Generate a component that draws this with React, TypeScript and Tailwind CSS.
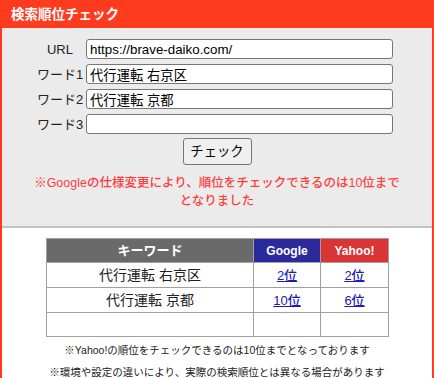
import { useState } from "react";

const font = { fontFamily: '"Liberation Sans", "Noto Sans CJK JP", sans-serif' };

interface Row {
  word: string;
  google: string;
  yahoo: string;
}

export default function App() {
  const [url, setUrl] = useState("https://brave-daiko.com/");
  const [words, setWords] = useState(["代行運転 右京区", "代行運転 京都", ""]);

  const rows: Row[] = [
    { word: "代行運転 右京区", google: "2位", yahoo: "2位" },
    { word: "代行運転 京都", google: "10位", yahoo: "6位" },
    { word: "", google: "", yahoo: "" },
  ];

  const setWord = (i: number, v: string) => {
    setWords((prev) => prev.map((w, idx) => (idx === i ? v : w)));
  };

  return (
    <div className="w-[434px] h-[378px] overflow-hidden bg-white" style={font}>
      <div className="border-2 border-[#fe3b1f] h-[400px]">
        {/* Header */}
        <div className="h-[26px] bg-[#fe3b1f] pl-[9px] flex items-center">
          <h1 className="text-white font-bold text-[13.5px] leading-none">検索順位チェック</h1>
        </div>

        {/* Form */}
        <div className="bg-[#ebebeb] pt-[11px] pb-[16px] border-b-2 border-[#c2c2c2]">
          <div className="flex flex-col gap-[5px]">
            {["URL", "ワード1", "ワード2", "ワード3"].map((label, i) => (
              <div key={label} className="flex items-center">
                <span className="ml-[34px] w-[48px] text-center text-[13px] text-[#222] leading-none">
                  {label}
                </span>
                <input
                  value={i === 0 ? url : words[i - 1]}
                  onChange={(e) => (i === 0 ? setUrl(e.target.value) : setWord(i - 1, e.target.value))}
                  className="ml-[2px] w-[307px] h-[20px] bg-white border border-[#767676] rounded-[3px] px-[3px] text-[13.33px] text-black outline-none"
                  style={font}
                />
              </div>
            ))}
          </div>
          <div className="flex justify-center mt-[4px]">
            <button className="w-[69px] h-[27px] bg-[#efefef] border border-[#767676] rounded-[3px] text-[13.33px] text-black">
              チェック
            </button>
          </div>
          <p className="mt-[9px] text-center text-[12.5px] leading-[18px] font-medium text-[#ff3d3d]">
            ※Googleの仕様変更により、順位をチェックできるのは10位まで
            <br />
            となりました
          </p>
        </div>

        {/* Results */}
        <div className="pt-[10px]">
          <table className="ml-[44px] w-[342px] border-collapse table-fixed">
            <thead>
              <tr className="h-[24px]">
                <th className="w-[207px] bg-[#6a6a6a] border border-[#a0a0a0] text-white text-[13px] font-bold">
                  キーワード
                </th>
                <th className="w-[67px] bg-[#2b2a9c] border border-[#a0a0a0] text-white text-[12px] font-bold">
                  Google
                </th>
                <th className="w-[68px] bg-[#da3434] border border-[#a0a0a0] text-white text-[12px] font-bold">
                  Yahoo!
                </th>
              </tr>
            </thead>
            <tbody>
              {rows.map((r, i) => (
                <tr key={i} className="h-[23.5px]">
                  <td className="border border-[#a0a0a0] text-center text-[14px] text-[#222]">{r.word}</td>
                  <td className="border border-[#a0a0a0] text-center">
                    <a href="#" className="text-[13px] font-medium text-[#1a1ab4] underline">
                      {r.google}
                    </a>
                  </td>
                  <td className="border border-[#a0a0a0] text-center">
                    <a href="#" className="text-[13px] font-medium text-[#1a1ab4] underline">
                      {r.yahoo}
                    </a>
                  </td>
                </tr>
              ))}
            </tbody>
          </table>
          <p className="mt-[2px] text-center text-[10.5px] leading-[22px] text-[#222]">
            ※Yahoo!の順位をチェックできるのは10位までとなっております
          </p>
          <p className="text-center text-[10.5px] leading-[22px] text-[#222]">
            ※環境や設定の違いにより、実際の検索順位とは異なる場合があります
          </p>
        </div>
      </div>
    </div>
  );
}
